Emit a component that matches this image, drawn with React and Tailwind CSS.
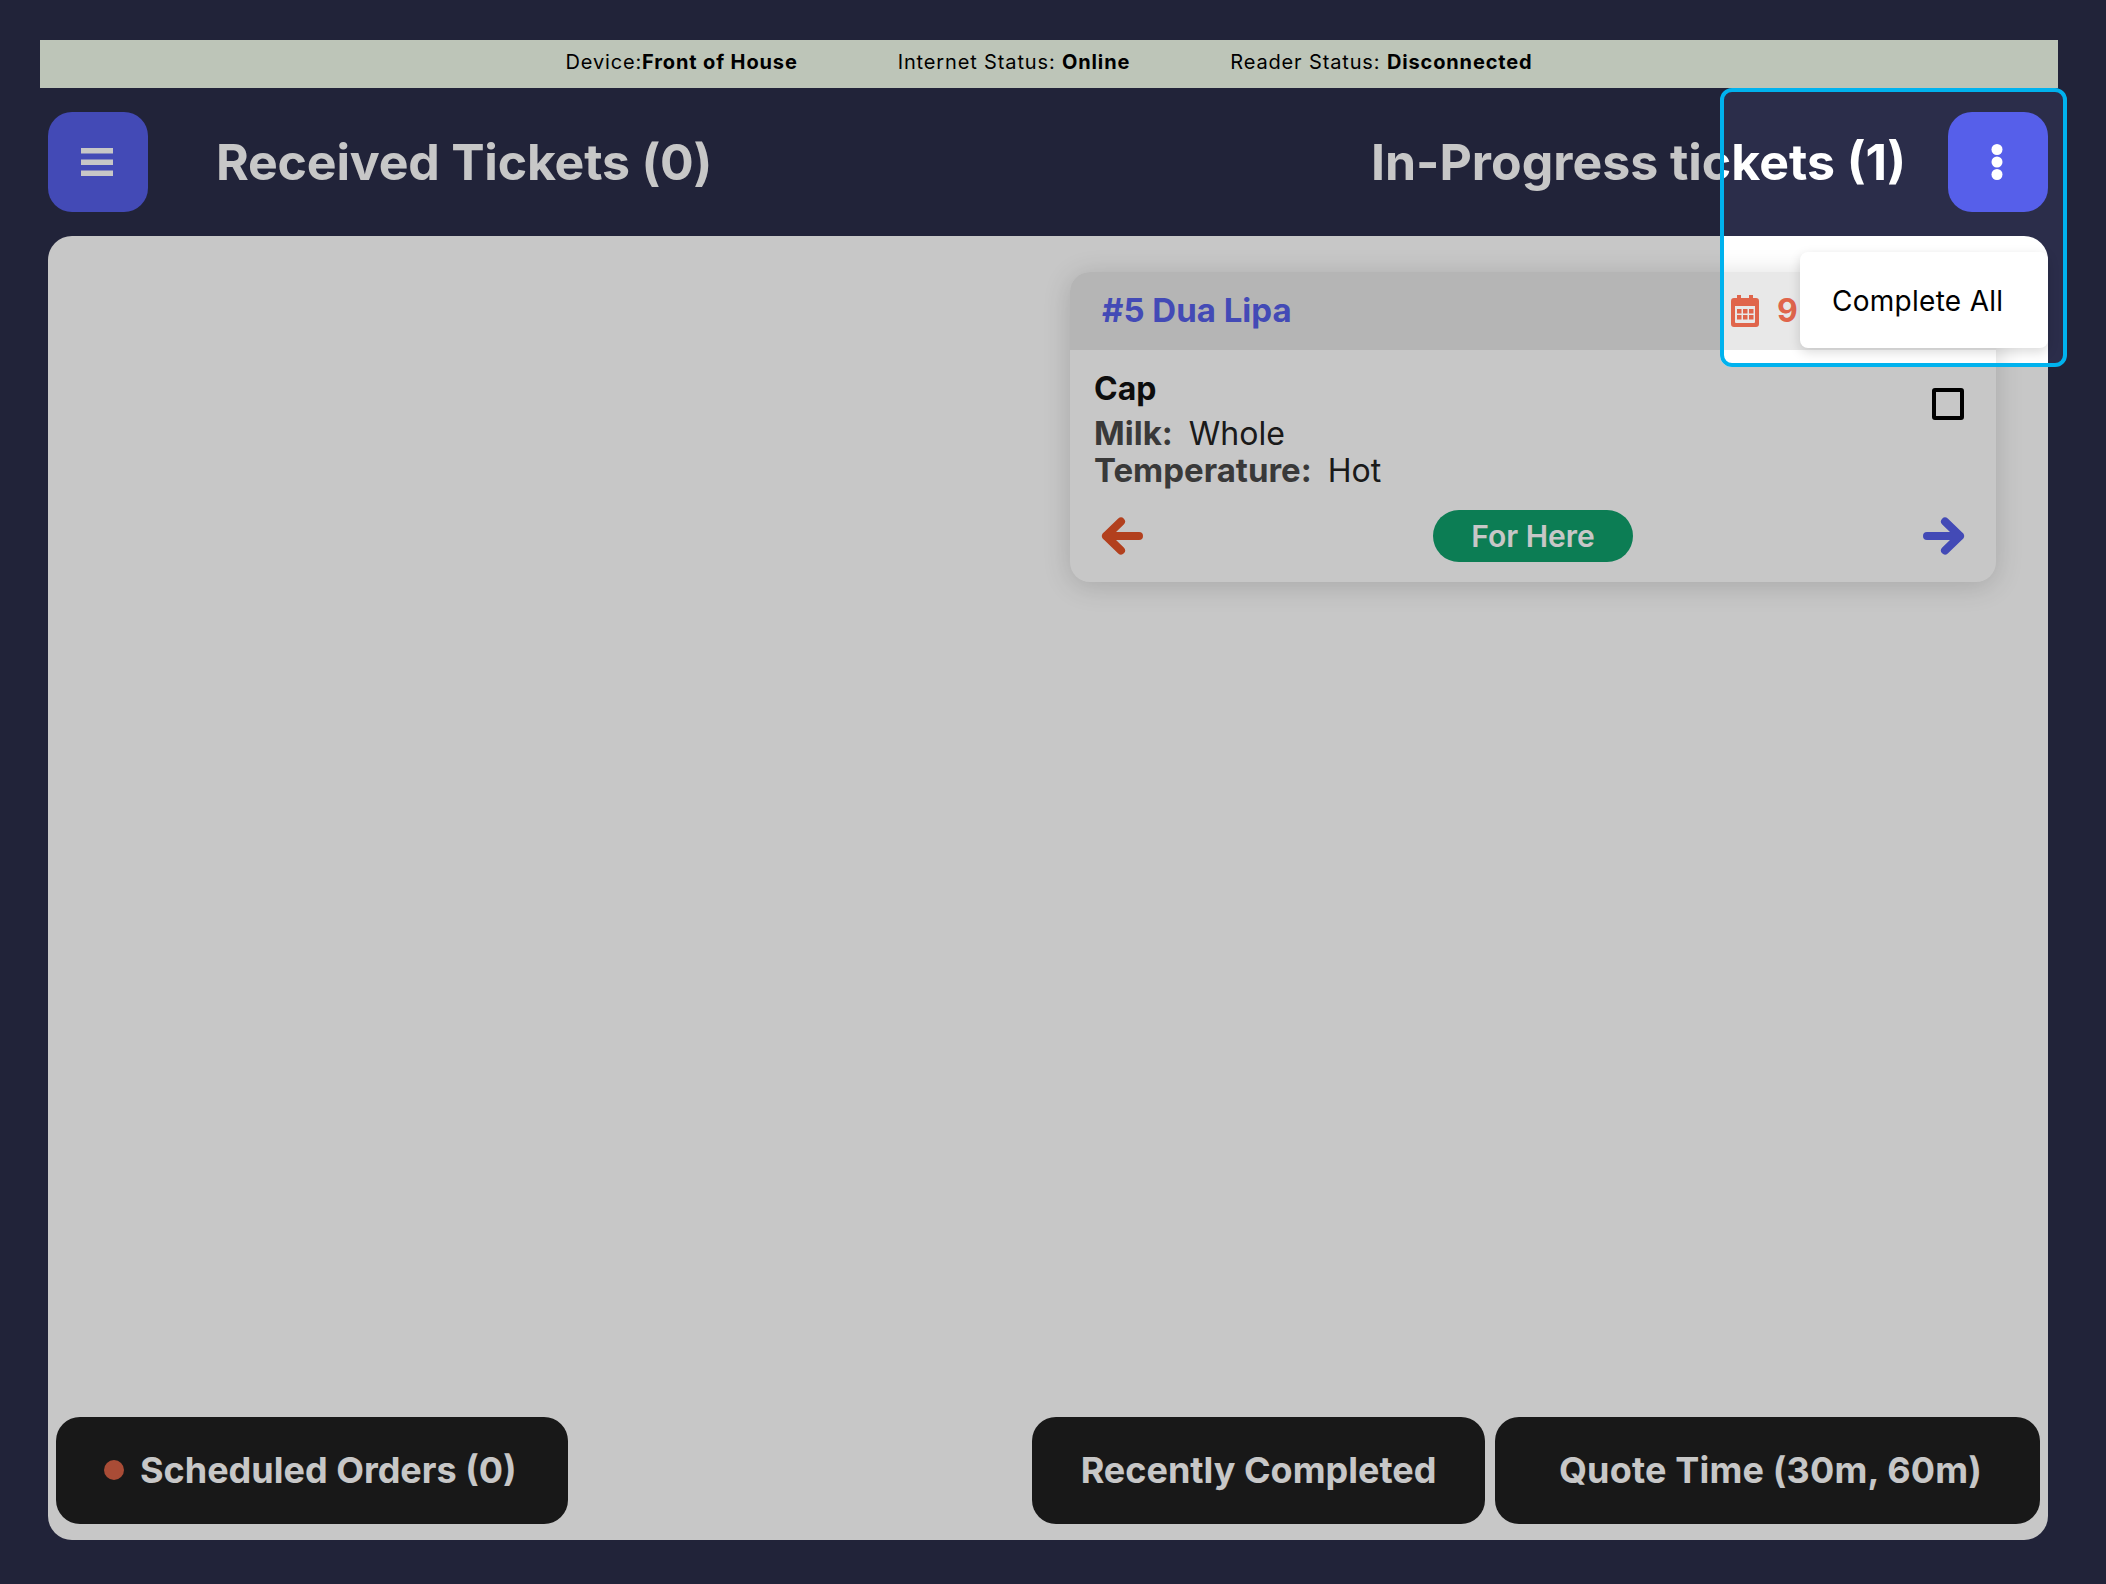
import React from "react";

const Hamburger = () => (
  <svg width="32" height="28" viewBox="0 0 32 28" fill="#fff">
    <rect x="0" y="0" width="32" height="5.5" />
    <rect x="0" y="11.5" width="32" height="5.5" />
    <rect x="0" y="22.5" width="32" height="5.5" />
  </svg>
);

const Kebab = () => (
  <svg width="12" height="36" viewBox="0 0 12 36" fill="#fff">
    <circle cx="6" cy="5.5" r="5.5" />
    <circle cx="6" cy="18" r="5.5" />
    <circle cx="6" cy="30.5" r="5.5" />
  </svg>
);

const CalendarIcon = () => (
  <svg width="28" height="32" viewBox="0 0 28 32">
    <path
      fill="#e0654b"
      fillRule="evenodd"
      d="M6 0h4v3h8V0h4v3h3a3 3 0 0 1 3 3v23a3 3 0 0 1-3 3H3a3 3 0 0 1-3-3V6a3 3 0 0 1 3-3h3V0zM4 11v16a1 1 0 0 0 1 1h18a1 1 0 0 0 1-1V11H4z"
    />
    <g fill="#e0654b">
      <rect x="6" y="14" width="4.5" height="4.5" />
      <rect x="12" y="14" width="4.5" height="4.5" />
      <rect x="18" y="14" width="4.5" height="4.5" />
      <rect x="6" y="20" width="4.5" height="4.5" />
      <rect x="12" y="20" width="4.5" height="4.5" />
      <rect x="18" y="20" width="4.5" height="4.5" />
    </g>
  </svg>
);

const ArrowIcon = ({ color, flip }) => (
  <svg
    width="42"
    height="38"
    viewBox="0 0 42 38"
    fill="none"
    stroke={color}
    strokeWidth="8"
    strokeLinecap="round"
    strokeLinejoin="round"
    className={flip ? "-scale-x-100" : ""}
  >
    <path d="M4 19h33M22 4.5L37 19 22 33.5" />
  </svg>
);

const BottomButton = ({ className, children }) => (
  <button
    className={`flex h-[107px] items-center rounded-[24px] bg-[#1f1f1f] pb-[2px] text-[36px] font-bold text-white ${className}`}
  >
    {children}
  </button>
);

const App = () => {
  return (
    <div className="relative h-[1584px] w-[2106px] overflow-hidden bg-[#2b2d4a] pt-10 font-['Inter',sans-serif]">
      <div className="ml-10 flex h-12 w-[2018px] items-center justify-center gap-[100px] bg-[#f3fdec] pb-[5px] text-[20px] tracking-[0.043em] text-black">
        <span>
          Device:<b className="font-bold">Front of House</b>
        </span>
        <span>
          Internet Status: <b className="font-bold">Online</b>
        </span>
        <span>
          Reader Status: <b className="font-bold">Disconnected</b>
        </span>
      </div>

      <div className="ml-12 flex h-[148px] w-[2000px] items-center justify-between">
        <div className="flex items-center gap-[68px]">
          <button className="flex h-[100px] w-[100px] items-center justify-center rounded-[24px] bg-[#565fea] pr-[2px]">
            <Hamburger />
          </button>
          <h1 className="text-[50px] font-bold tracking-[-0.004em] text-white">
            Received Tickets (0)
          </h1>
        </div>
        <div className="flex items-center gap-[42px]">
          <h1 className="text-[50px] font-bold text-white">
            In-Progress tickets (1)
          </h1>
          <button className="flex h-[100px] w-[100px] items-center justify-center rounded-[24px] bg-[#565fea] pr-[2px]">
            <Kebab />
          </button>
        </div>
      </div>

      <div className="ml-12 flex h-[1304px] w-[2000px] flex-col rounded-[24px] bg-white">
        <div className="grid flex-1 grid-cols-2">
          <div />
          <div className="pt-9 pl-[22px] pr-[52px]">
            <div className="h-[310px] overflow-hidden rounded-[20px] bg-white shadow-[0_4px_28px_rgba(0,0,0,0.16)]">
              <div className="flex h-[78px] items-center justify-between bg-[#e8e8e8] pl-8">
                <span className="text-[33px] font-bold text-[#565fea]">
                  #5 Dua Lipa
                </span>
                <div className="flex w-[265px] items-center gap-[18px]">
                  <CalendarIcon />
                  <span className="text-[32px] font-bold text-[#e0654b]">9</span>
                </div>
              </div>
              <div className="flex items-start justify-between pt-[19px] pl-6 pr-8">
                <div>
                  <div className="text-[32px] leading-[40px] font-bold text-[#111]">
                    Cap
                  </div>
                  <div className="mt-[5px] text-[32px] leading-[38px] text-[#222]">
                    <span className="text-[33px] font-bold text-[#4a4a4a]">
                      Milk:
                    </span>
                    <span className="ml-4">Whole</span>
                  </div>
                  <div className="-mt-[2px] text-[32px] leading-[38px] text-[#222]">
                    <span className="text-[33px] font-bold text-[#4a4a4a]">
                      Temperature:
                    </span>
                    <span className="ml-4">Hot</span>
                  </div>
                </div>
                <div className="mt-[19px] h-8 w-8 rounded-[3px] border-4 border-black" />
              </div>
              <div className="mt-[20px] flex items-center justify-between pl-[31px] pr-[31px]">
                <ArrowIcon color="#e55227" flip />
                <div className="flex h-[52px] w-[200px] items-center justify-center rounded-full bg-[#10a06c] text-[30px] font-semibold text-white">
                  For Here
                </div>
                <ArrowIcon color="#565fea" />
              </div>
            </div>
          </div>
        </div>

        <div className="flex items-center justify-between px-2 pb-4">
          <BottomButton className="w-[512px] gap-[16px] pl-12">
            <span className="h-5 w-5 rounded-full bg-[#d96246]" />
            Scheduled Orders (0)
          </BottomButton>
          <div className="flex gap-[10px]">
            <BottomButton className="w-[453px] justify-center">
              Recently Completed
            </BottomButton>
            <BottomButton className="w-[545px] justify-center pl-[6px] tracking-[0.005em]">
              Quote Time (30m, 60m)
            </BottomButton>
          </div>
        </div>
      </div>

      {/* spotlight cut out of the dim layer, dim comes from the box shadow */}
      <div className="absolute top-[88px] left-[1720px] h-[279px] w-[347px] rounded-[12px] border-[4px] border-[#00b2ee] shadow-[0_0_0_3000px_rgba(0,0,0,0.22)]" />

      <div className="absolute top-[252px] left-[1800px] flex h-[96px] w-[248px] items-center rounded-[8px] bg-white pt-[2px] pl-[32px] text-[28px] tracking-[0.01em] text-black shadow-[0_4px_12px_rgba(0,0,0,0.15)]">
        Complete All
      </div>
    </div>
  );
};

export default App;
